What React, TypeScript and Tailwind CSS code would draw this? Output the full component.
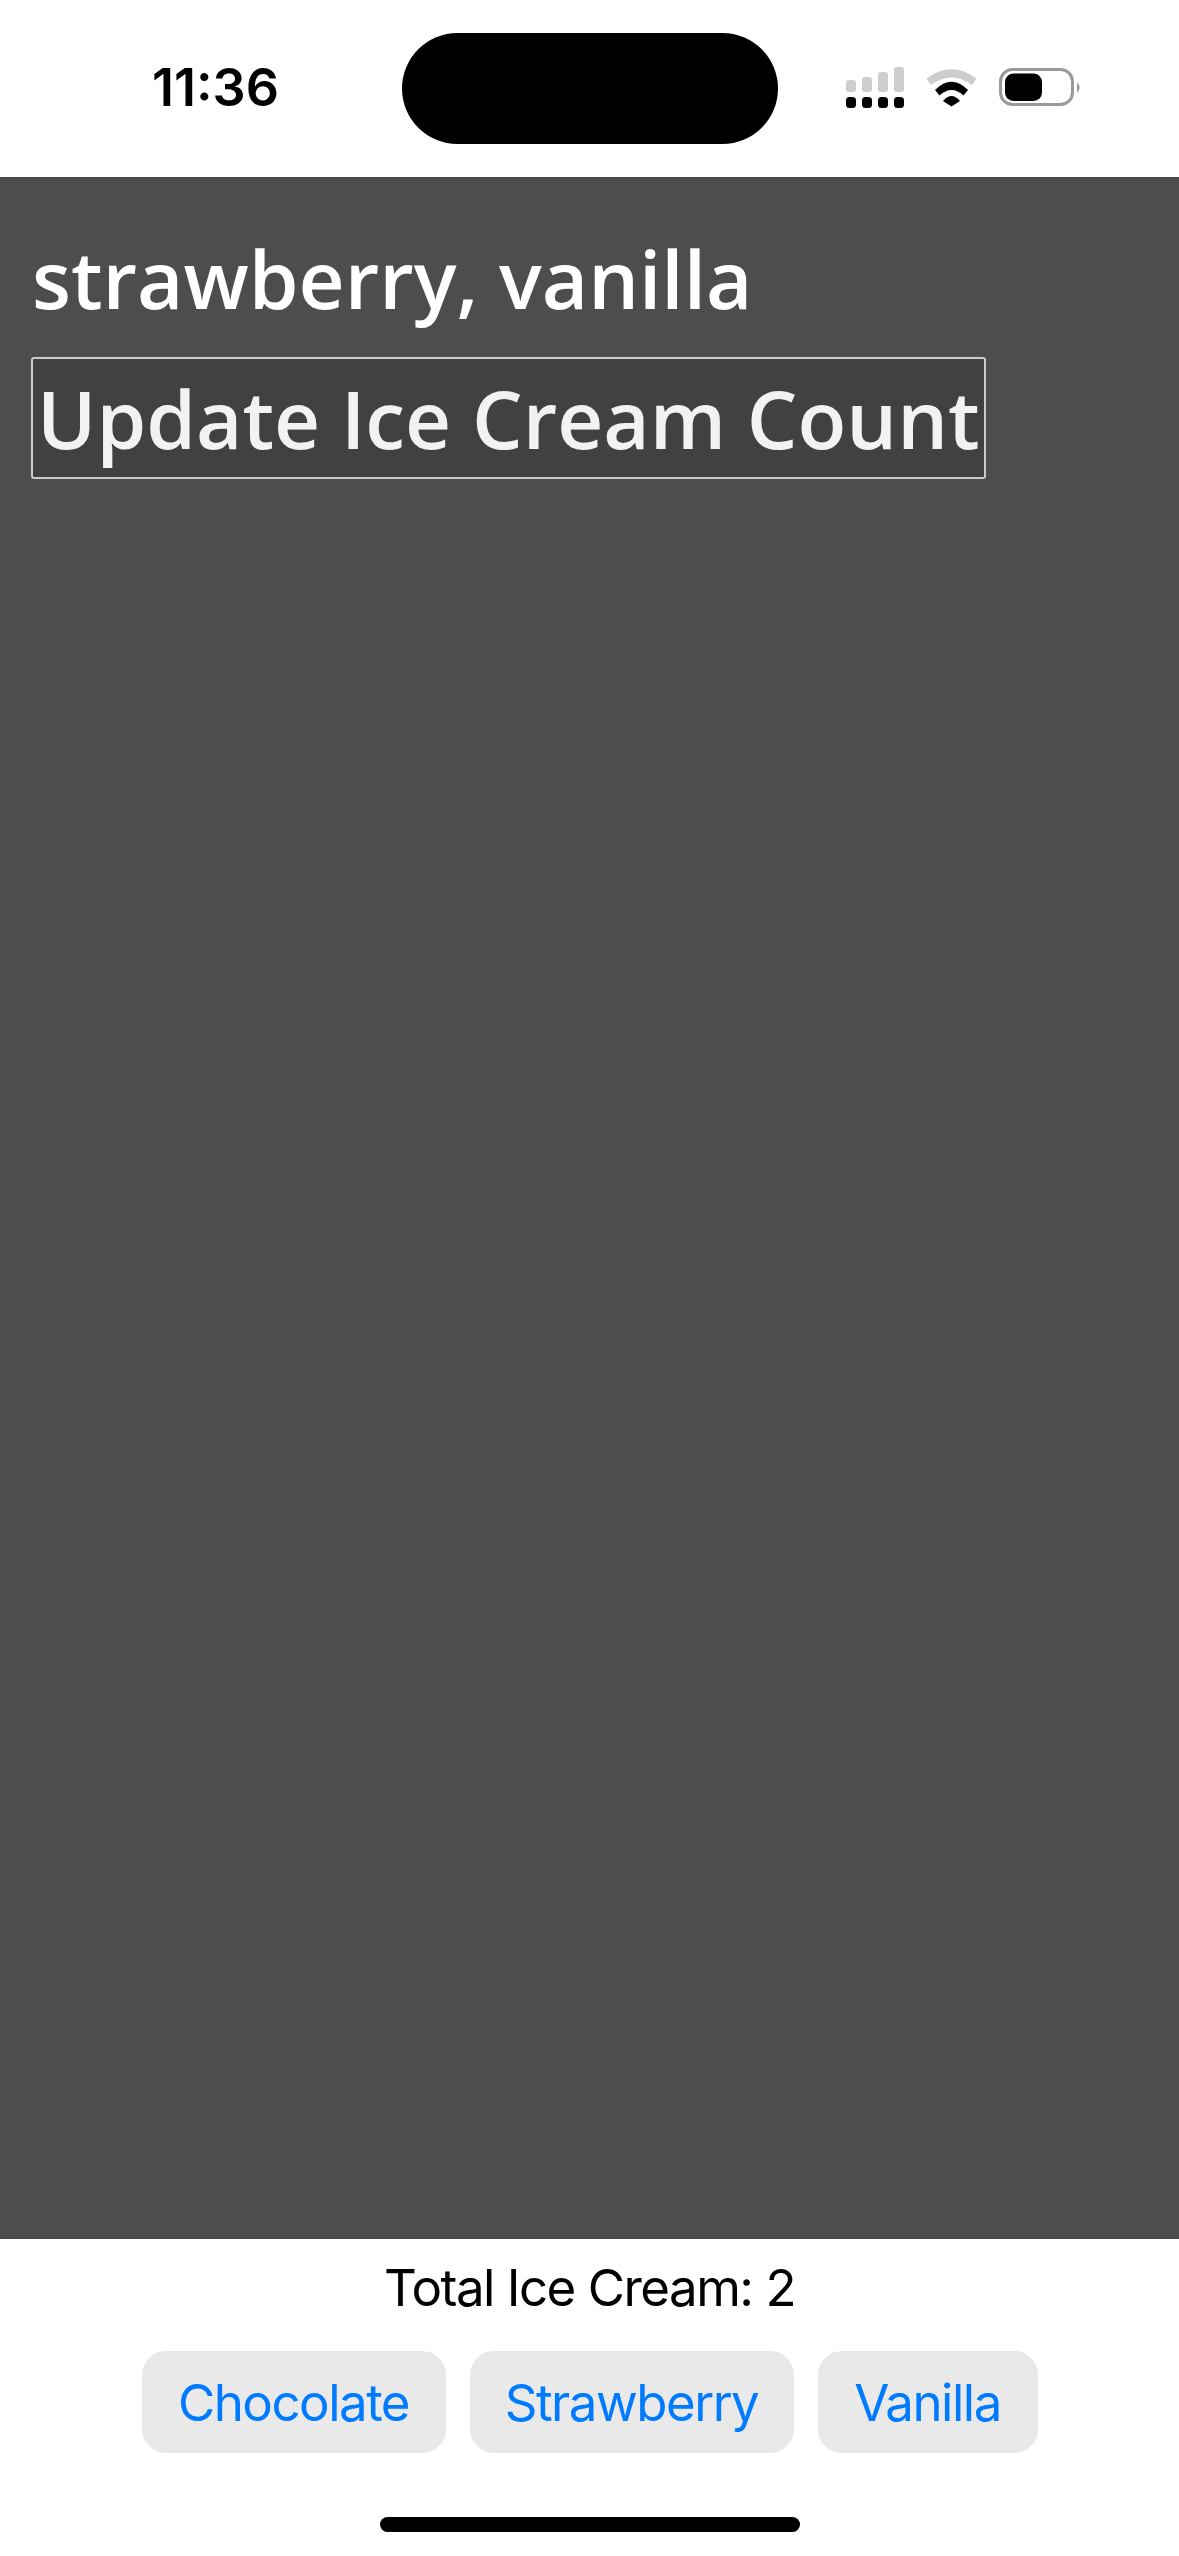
import React from 'react';

const StatusIcons: React.FC = () => (
    <svg width="236" height="44" viewBox="846 66 236 44" className="ml-[68px]">
        <g fill="#cdcdcd">
            <rect x="846" y="80" width="10" height="12" rx="3" />
            <rect x="862" y="77" width="10" height="15" rx="3" />
            <rect x="878" y="72" width="10" height="20" rx="3" />
            <rect x="894" y="67" width="10" height="25" rx="3" />
        </g>
        <g fill="#000">
            <rect x="846" y="97" width="10" height="11" rx="3.5" />
            <rect x="862" y="97" width="10" height="11" rx="3.5" />
            <rect x="878" y="97" width="10" height="11" rx="3.5" />
            <rect x="894" y="97" width="10" height="11" rx="3.5" />
        </g>
        <path d="M926.5 78.5 Q951.5 60 976.5 78.5 L972 85 Q951.5 70 931 85 Z" fill="#cdcdcd" />
        <path d="M935 90 Q951.5 73.5 968 90 L963.5 95.5 Q951.5 84.5 939.5 95.5 Z" fill="#000" />
        <path d="M943 101 Q951.5 91 960 101 L951.5 106.5 Z" fill="#000" />
        <rect x="1000.5" y="69.5" width="72" height="35" rx="12" fill="none" stroke="#999" strokeWidth="3" />
        <rect x="1005" y="73.5" width="37" height="27.5" rx="8.5" fill="#000" />
        <path d="M1077 82 Q1082 87.5 1077 93 Z" fill="#999" />
    </svg>
);

const FlavorButton: React.FC<{ label: string; width: string }> = ({ label, width }) => (
    <button className={`${width} h-[102px] pt-[2px] rounded-[24px] bg-[#e9e9e9] text-[#007aff] text-[51px] tracking-[-1.5px] font-['Inter',sans-serif]`}>
        {label}
    </button>
);

const App: React.FC = () => {
    return (
        <div className="flex flex-col h-[2556px] w-[1179px] bg-white overflow-hidden">
            <div className="flex items-center h-[177px] shrink-0 pl-[152px] pb-[1px]">
                <span className="w-[128px] text-[52px] font-semibold text-black font-['Inter',sans-serif] leading-none">11:36</span>
                <div className="ml-[122px] w-[376px] h-[111px] rounded-full bg-black"></div>
                <StatusIcons />
            </div>
            <div className="flex-1 flex flex-col items-start bg-[#4d4d4d] pl-[32px] pt-[46px] font-['Open_Sans',sans-serif]">
                <h1 className="text-[80px] leading-[110px] font-semibold text-white">strawberry, vanilla</h1>
                <button className="mt-[24px] -ml-[1px] h-[122px] px-[4px] border-2 border-[#cccccc] rounded-[3px] bg-[#414141] text-[#f2f2f2] text-[80px] font-semibold leading-none">
                    Update Ice Cream Count
                </button>
            </div>
            <div className="shrink-0 h-[317px] flex flex-col items-center">
                <p className="mt-[18px] text-[51px] leading-[62px] tracking-[-1.5px] text-black font-['Inter',sans-serif]">Total Ice Cream: 2</p>
                <div className="mt-[32px] flex gap-[24px]">
                    <FlavorButton label="Chocolate" width="w-[304px]" />
                    <FlavorButton label="Strawberry" width="w-[324px]" />
                    <FlavorButton label="Vanilla" width="w-[220px]" />
                </div>
                <div className="mt-[64px] w-[420px] h-[15px] rounded-full bg-black"></div>
            </div>
        </div>
    );
};

export default App;
